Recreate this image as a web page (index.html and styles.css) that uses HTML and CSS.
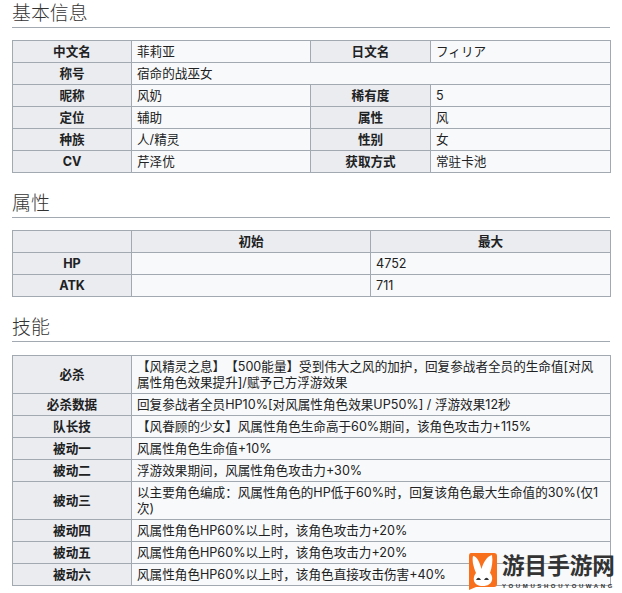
FILE: index.html
```html
<!DOCTYPE html>
<html lang="zh">
<head>
<meta charset="utf-8">
<title>基本信息</title>
<link rel="stylesheet" href="styles.css">
</head>
<body>
<main class="content">
  <h2 class="section-title">基本信息</h2>
  <table class="wikitable">
    <colgroup><col class="c-119"><col class="c-179"><col class="c-120"><col class="c-180"></colgroup>
    <tr><th>中文名</th><td>菲莉亚</td><th>日文名</th><td>フィリア</td></tr>
    <tr><th>称号</th><td colspan="3">宿命的战巫女</td></tr>
    <tr><th>昵称</th><td>风奶</td><th>稀有度</th><td>5</td></tr>
    <tr><th>定位</th><td>辅助</td><th>属性</th><td>风</td></tr>
    <tr><th>种族</th><td>人/精灵</td><th>性别</th><td>女</td></tr>
    <tr><th>CV</th><td>芹泽优</td><th>获取方式</th><td>常驻卡池</td></tr>
  </table>
  <h2 class="section-title">属性</h2>
  <table class="wikitable">
    <colgroup><col class="c-119"><col class="c-239"><col class="c-240"></colgroup>
    <tr><th></th><th>初始</th><th>最大</th></tr>
    <tr><th>HP</th><td></td><td>4752</td></tr>
    <tr><th>ATK</th><td></td><td>711</td></tr>
  </table>
  <h2 class="section-title section-title-skills">技能</h2>
  <table class="wikitable">
    <colgroup><col class="c-119"><col class="c-479"></colgroup>
    <tr><th>必杀</th><td>【风精灵之息】【500能量】受到伟大之风的加护，回复参战者全员的生命值[对风属性角色效果提升]/赋予己方浮游效果</td></tr>
    <tr><th>必杀数据</th><td>回复参战者全员HP10%[对风属性角色效果UP50%] / 浮游效果12秒</td></tr>
    <tr><th>队长技</th><td>【风眷顾的少女】风属性角色生命高于60%期间，该角色攻击力+115%</td></tr>
    <tr><th>被动一</th><td>风属性角色生命值+10%</td></tr>
    <tr><th>被动二</th><td>浮游效果期间，风属性角色攻击力+30%</td></tr>
    <tr><th>被动三</th><td>以主要角色编成：风属性角色的HP低于60%时，回复该角色最大生命值的30%(仅1次)</td></tr>
    <tr><th>被动四</th><td>风属性角色HP60%以上时，该角色攻击力+20%</td></tr>
    <tr><th>被动五</th><td>风属性角色HP60%以上时，该角色攻击力+20%</td></tr>
    <tr><th>被动六</th><td>风属性角色HP60%以上时，该角色直接攻击伤害+40%</td></tr>
  </table>
</main>
<aside class="watermark">
  <svg class="wm-logo" width="29" height="37" viewBox="0 0 29 37" aria-hidden="true">
    <path d="M3 0H26Q29 0 29 3V31Q29 34 26 34H8L1 37V3Q1 0 3 0Z" fill="#f8701c"/>
    <path d="M8 20C5 13 4 7 5 3C9 3 12 10 13.500 16C15 10 19 3 24 2C25 8 24 14 22 20C26 24 25 33 15 33C5 33 4 25 8 20Z" fill="#fff"/>
    <path d="M8 27Q10.500 22.500 13 27Z" fill="#333"/>
    <path d="M16 27Q18.500 22.500 21 27Z" fill="#333"/>
  </svg>
  <div class="wm-text">
    <div class="wm-name">游目手游网</div>
    <div class="wm-pinyin">YOUMUSHOUYOUWANG</div>
  </div>
</aside>
</body>
</html>
```
FILE: styles.css
```css
html, body {
  margin: 0;
  padding: 0;
  background: #fff;
}
body {
  position: relative;
  width: 622px;
  height: 593px;
  overflow: hidden;
  color: #202122;
  font-family: Inter, "Noto Sans CJK SC", sans-serif;
  font-size: 12.6px;
  text-spacing-trim: space-all;
}
.content {
  padding: 0 12px;
}
.section-title {
  margin: 0 0 12px;
  height: 27px;
  border-bottom: 1px solid #a2a9b1;
  font-size: 18.9px;
  font-weight: 300;
  line-height: 28px;
  color: #333;
}
.wikitable + .section-title {
  margin-top: 17px;
}
.section-title-skills {
  margin-bottom: 13px;
}
.wikitable {
  width: 597.5px;
  table-layout: fixed;
  border-collapse: collapse;
  background: #f8f9fa;
}
.wikitable th,
.wikitable td {
  padding: 3px 5px 2px;
  border: 1px solid #a2a9b1;
  line-height: 16px;
  text-align: left;
}
.wikitable th {
  background: #eaecf0;
  font-weight: 700;
  text-align: center;
}
.c-119 { width: 119px; }
.c-120 { width: 120px; }
.c-179 { width: 179px; }
.c-180 { width: 180px; }
.c-239 { width: 239px; }
.c-240 { width: 240px; }
.c-479 { width: 479px; }
.watermark {
  position: absolute;
  left: 468px;
  top: 553px;
  display: flex;
  gap: 5px;
}
.wm-text {
  display: flex;
  flex-direction: column;
}
.wm-name {
  font-size: 22.6px;
  line-height: 26px;
  font-weight: 700;
  color: #333;
  white-space: nowrap;
}
.wm-pinyin {
  margin-top: 3px;
  font-family: "Liberation Sans", sans-serif;
  font-size: 6px;
  line-height: 8px;
  font-weight: 700;
  letter-spacing: 2.6px;
  color: #333;
  white-space: nowrap;
}
```
